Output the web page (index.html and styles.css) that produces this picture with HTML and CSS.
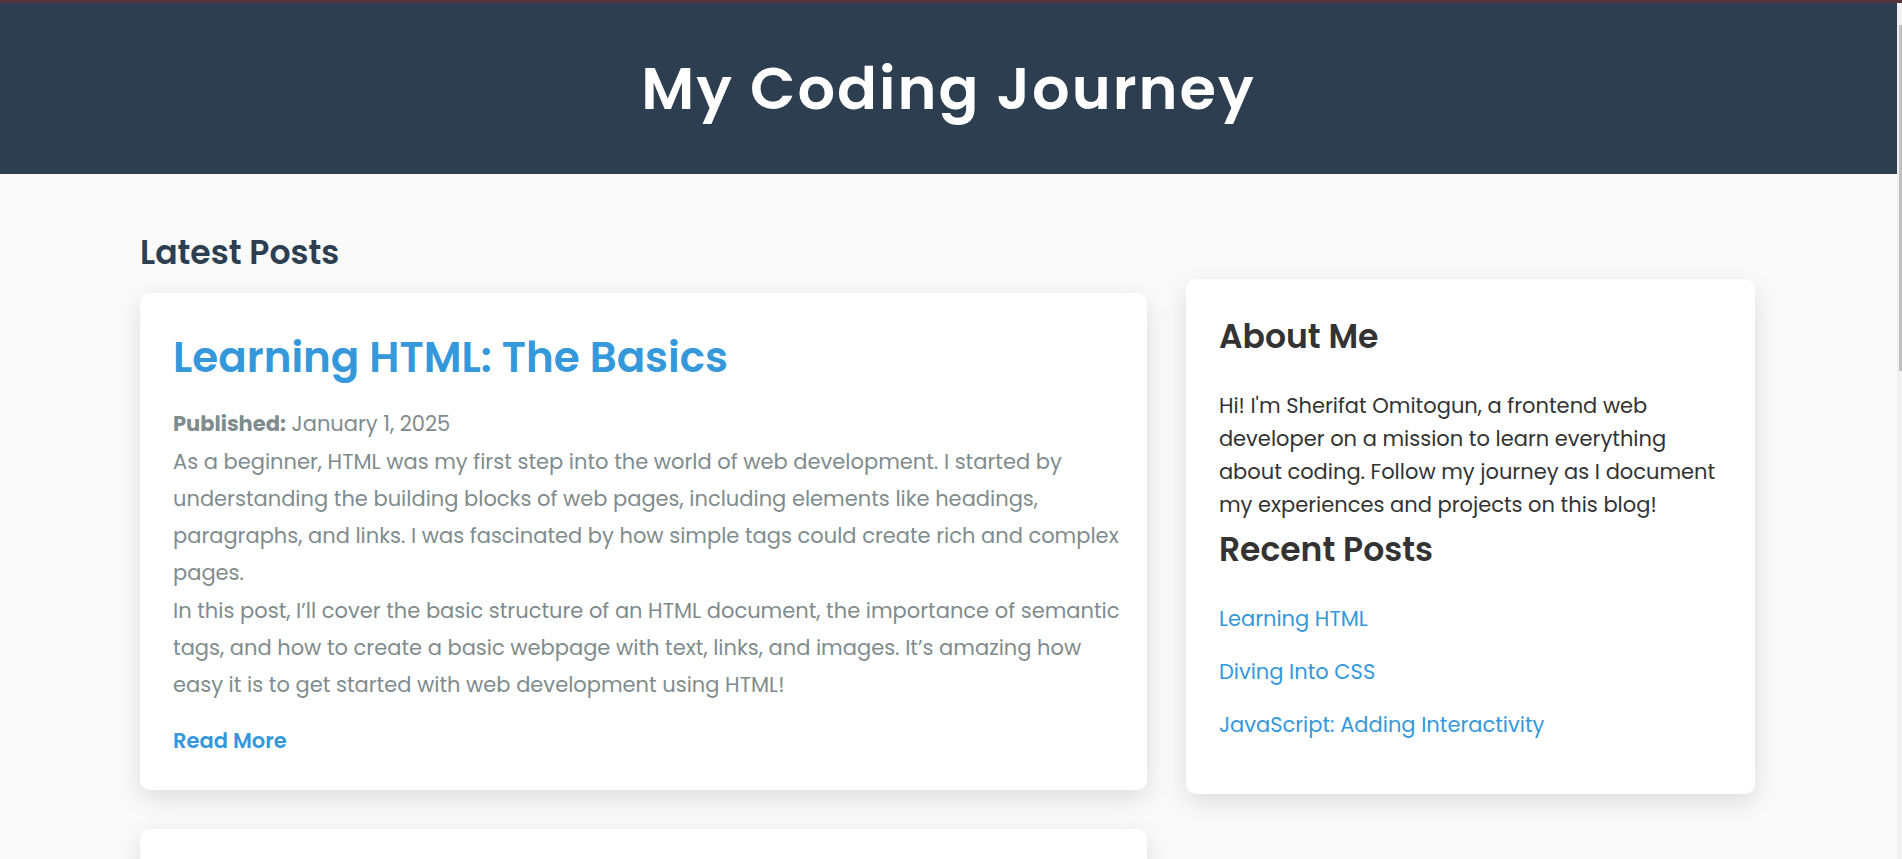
FILE: index.html
```html
<!DOCTYPE html>
<html lang="en">
<head>
<meta charset="utf-8">
<title>My Coding Journey</title>
<link rel="stylesheet" href="styles.css">
</head>
<body>
<div class="viewport">
  <div class="page">
    <header class="site-header">
      <h1 class="site-title">My Coding Journey</h1>
    </header>
    <div class="container">
      <main class="posts">
        <h2 class="section-title">Latest Posts</h2>
        <article class="card post">
          <h3 class="post-title">Learning HTML: The Basics</h3>
          <p class="post-text"><strong>Published:</strong> January 1, 2025</p>
          <p class="post-text">As a beginner, HTML was my first step into the world of web development. I started by understanding the building blocks of web pages, including elements like headings, paragraphs, and links. I was fascinated by how simple tags could create rich and complex pages.</p>
          <p class="post-text">In this post, I’ll cover the basic structure of an HTML document, the importance of semantic tags, and how to create a basic webpage with text, links, and images. It’s amazing how easy it is to get started with web development using HTML!</p>
          <a class="read-more" href="#">Read More</a>
        </article>
        <article class="card post next-post"></article>
      </main>
      <aside class="card sidebar">
        <h2 class="side-title">About Me</h2>
        <p class="about">Hi! I'm Sherifat Omitogun, a frontend web developer on a mission to learn everything about coding. Follow my journey as I document my experiences and projects on this blog!</p>
        <h2 class="side-title">Recent Posts</h2>
        <ul class="recent">
          <li><a href="#">Learning HTML</a></li>
          <li><a href="#">Diving Into CSS</a></li>
          <li><a href="#">JavaScript: Adding Interactivity</a></li>
        </ul>
      </aside>
    </div>
  </div>
  <div class="scrollbar"><div class="thumb"></div></div>
</div>
</body>
</html>
```
FILE: styles.css
```css
* {
  box-sizing: border-box;
  margin: 0;
  padding: 0;
}

body {
  height: 100vh;
  overflow: hidden;
  border-top: 3px solid #55363c;
  background: #fafafa;
  color: #333;
  font-family: Poppins, Inter, sans-serif;
  font-size: 21px;
  line-height: 33px;
}

a {
  color: #3498db;
  text-decoration: none;
}

.viewport {
  display: flex;
  height: 100%;
}

.page {
  flex: 1;
  min-width: 0;
  overflow: hidden;
}

.site-header {
  padding: 39px 20px;
  background: #2c3e50;
  text-align: center;
}

.site-title {
  color: #fff;
  font-size: 59px;
  font-weight: 600;
  letter-spacing: 2px;
  line-height: 93px;
}

.container {
  display: grid;
  grid-template-columns: 23fr 13fr;
  align-items: start;
  gap: 39px;
  padding: 52px 142px 0 140px;
}

.section-title {
  margin-bottom: 14px;
  color: #2c3e50;
  font-size: 33px;
  font-weight: 600;
  line-height: 53px;
}

.card {
  padding: 33px;
  border-radius: 10px;
  background: #fff;
  box-shadow: 0 8px 26px rgba(0, 0, 0, 0.12);
}

.post {
  margin-bottom: 39px;
  padding-right: 24px;
}

.post-title {
  margin-bottom: 16px;
  color: #3498db;
  font-size: 42px;
  font-weight: 600;
  line-height: 63px;
}

.post-text {
  margin-bottom: 1px;
  color: #7f8c8d;
  line-height: 37px;
}

.read-more {
  display: inline-block;
  margin-top: 20px;
  font-weight: 600;
}

.next-post {
  min-height: 400px;
}

.sidebar {
  margin-top: 53px;
  padding-top: 31px;
}

.side-title {
  margin-bottom: 26px;
  font-size: 33px;
  font-weight: 600;
  line-height: 53px;
}

.about {
  margin-bottom: 2px;
}

.recent {
  list-style: none;
}

.recent li {
  margin-bottom: 20px;
}

.scrollbar {
  width: 5px;
  padding: 22px 0 0 2px;
  background: #f1f1f1;
}

.thumb {
  height: 346px;
  background: #c1c1c1;
}
```
